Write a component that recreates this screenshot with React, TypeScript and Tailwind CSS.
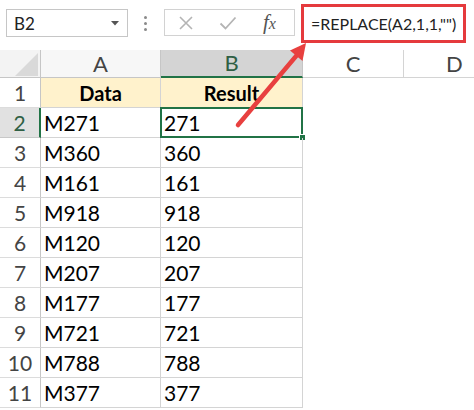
import React from "react";

const rows: [string, string][] = [
  ["M271", "271"],
  ["M360", "360"],
  ["M161", "161"],
  ["M918", "918"],
  ["M120", "120"],
  ["M207", "207"],
  ["M177", "177"],
  ["M721", "721"],
  ["M788", "788"],
  ["M377", "377"],
];

export default function App() {
  return (
    <div
      className="relative w-[474px] h-[410px] overflow-hidden bg-white"
      style={{ fontFamily: "Lato, 'Open Sans', sans-serif" }}
    >
      {/* Formula bar */}
      <div className="flex h-[50px] items-start">
        <div className="ml-[6px] mt-[9px] flex h-[28px] w-[122px] items-center justify-between border border-[#c6c6c6] pl-[7px] pr-[8px]">
          <span className="text-[17px] leading-none text-[#222]">B2</span>
          <svg width="8" height="5" viewBox="0 0 8 5">
            <polygon points="0,0 8,0 4,4.5" fill="#555" />
          </svg>
        </div>
        <div className="ml-[16px] mt-[16px] flex flex-col gap-[3px]">
          <span className="block h-[3px] w-[3px] rounded-full bg-[#8a8a8a]" />
          <span className="block h-[3px] w-[3px] rounded-full bg-[#8a8a8a]" />
          <span className="block h-[3px] w-[3px] rounded-full bg-[#8a8a8a]" />
        </div>
        <div className="ml-[17px] mt-[9px] flex h-[27px] w-[131px] items-center border border-[#d2d2d2]">
          <svg className="ml-[13px]" width="16" height="16" viewBox="0 0 16 16">
            <path d="M2 2 L14 14 M14 2 L2 14" stroke="#b4b4b4" strokeWidth="1.6" fill="none" />
          </svg>
          <svg className="ml-[25px]" width="18" height="16" viewBox="0 0 18 16">
            <path d="M1.5 8.5 L6.5 13.5 L16.5 2.5" stroke="#b4b4b4" strokeWidth="1.8" fill="none" />
          </svg>
          <span
            className="ml-[26px] text-[21px] italic leading-none text-[#555]"
            style={{ fontFamily: "'Liberation Serif', 'DejaVu Serif', serif" }}
          >
            f<span className="text-[16px]">x</span>
          </span>
        </div>
        <div className="ml-[6px] mt-[4px] flex h-[39px] w-[165px] items-center border-[3px] border-[#e53a3d] pl-[7px]">
          <span className="text-[16px] leading-none text-[#222]">=REPLACE(A2,1,1,"")</span>
        </div>
      </div>

      {/* Sheet grid */}
      <div className="grid grid-cols-[41px_120px_142px_101px_1fr]">
        {/* header row */}
        <div className="relative h-[28px] border-r border-b border-[#c6c6c6] bg-[#f3f3f3]">
          <svg className="absolute left-[15px] top-[3px]" width="23" height="23" viewBox="0 0 23 23">
            <polygon points="23,0 23,23 0,23" fill="#d9d9d9" />
          </svg>
        </div>
        <div className="flex h-[28px] items-center justify-center border-r border-b border-[#c6c6c6] bg-[#f7f7f7] text-[22px] leading-none text-[#444]">
          A
        </div>
        <div className="flex h-[28px] items-center justify-center border-r border-b-2 border-r-[#c6c6c6] border-b-[#217346] bg-[#d4d4d4] text-[22px] leading-none text-[#2f5f44]">
          B
        </div>
        <div className="flex h-[28px] items-center justify-center border-r border-b border-[#d4d4d4] bg-white text-[22px] leading-none text-[#444]">
          C
        </div>
        <div className="flex h-[28px] items-center pl-[42px] border-b border-[#d4d4d4] bg-white text-[22px] leading-none text-[#444]">
          D
        </div>

        {/* row 1 */}
        <div className="flex h-[30px] items-center justify-center border-r border-b border-r-[#c6c6c6] border-b-[#dcdcdc] bg-white text-[21px] leading-none text-[#444]">
          1
        </div>
        <div className="flex h-[30px] items-center justify-center border-r border-b border-[#d4d4d4] bg-[#fff2cc] text-[20px] font-bold leading-none text-black">
          Data
        </div>
        <div className="flex h-[30px] items-center justify-center border-r border-b border-[#d4d4d4] bg-[#fff2cc] text-[20px] font-bold leading-none text-black">
          Result
        </div>
        <div className="h-[30px] bg-white" />
        <div className="h-[30px] bg-white" />

        {rows.map(([a, b], i) => {
          const n = i + 2;
          const selected = n === 2;
          return (
            <React.Fragment key={n}>
              <div
                className={
                  selected
                    ? "flex h-[30px] items-center justify-center border-r-2 border-b border-r-[#217346] border-b-[#c8c8c8] bg-[#e1e1e1] text-[21px] leading-none text-[#2f5f44]"
                    : "flex h-[30px] items-center justify-center border-r border-b border-r-[#c6c6c6] border-b-[#dcdcdc] bg-white text-[21px] leading-none text-[#444]"
                }
              >
                {n}
              </div>
              <div className="flex h-[30px] items-center border-r border-b border-[#d4d4d4] pl-[3px] text-[21px] leading-none text-black">
                {a}
              </div>
              <div className="relative flex h-[30px] items-center border-r border-b border-[#d4d4d4] pl-[3px] text-[21px] leading-none text-black">
                {b}
                {selected && (
                  <>
                    <div className="absolute left-[-1px] top-[-1px] h-[31px] w-[143px] border-2 border-[#217346]" />
                    <div className="absolute right-[-4px] bottom-[-4px] h-[7px] w-[7px] border border-white bg-[#217346]" />
                  </>
                )}
              </div>
              <div className="h-[30px] bg-white" />
              <div className="h-[30px] bg-white" />
            </React.Fragment>
          );
        })}
      </div>

      {/* Red arrow annotation */}
      <svg className="pointer-events-none absolute left-0 top-0" width="474" height="410" viewBox="0 0 474 410">
        <line x1="238" y1="125" x2="297" y2="55" stroke="#e8403f" strokeWidth="4.5" strokeLinecap="round" />
        <polygon points="306,43 302.5,61 290,50.5" fill="#e8403f" />
      </svg>
    </div>
  );
}
